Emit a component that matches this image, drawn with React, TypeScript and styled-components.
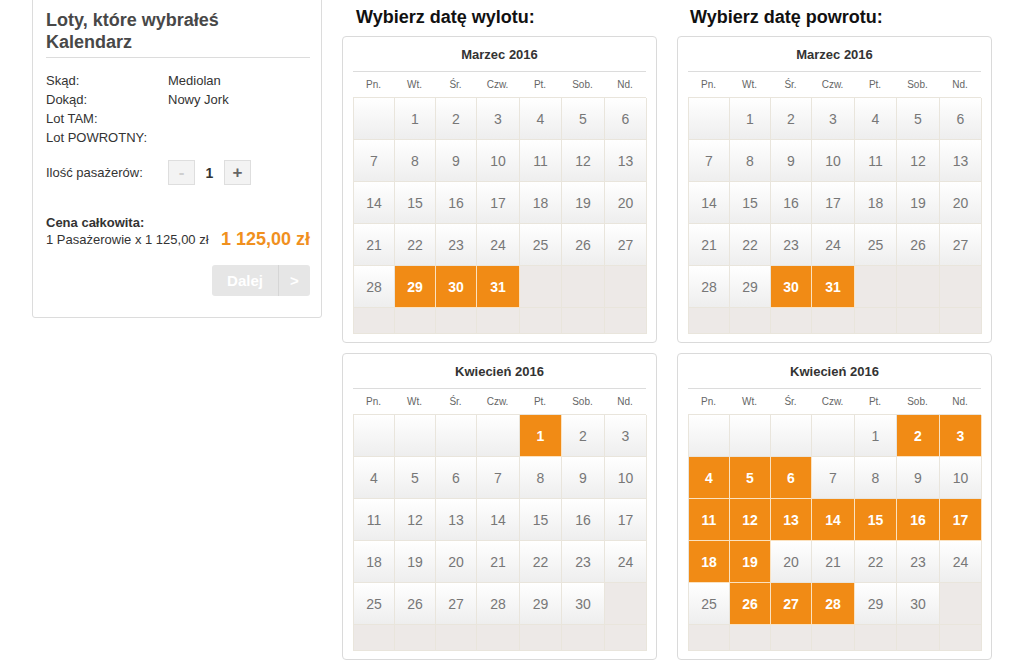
import React from "react";
import styled, { createGlobalStyle, css } from "styled-components";

const Global = createGlobalStyle`
  html, body { margin: 0; padding: 0; background: #fff; }
  body { font-family: "Liberation Sans", Arial, Helvetica, sans-serif; color: #333; overflow: hidden; }
  * { box-sizing: border-box; }
`;

const Page = styled.div`
  display: flex;
  align-items: flex-start;
  gap: 20px;
  padding-left: 32px;
  width: 1022px;
  height: 669px;
  overflow: hidden;
`;

const Panel = styled.div`
  width: 290px;
  margin-top: -3px;
  border: 1px solid #dcdcdc;
  border-radius: 3px;
  padding: 11px 11px 21px 13px;
`;

const PanelTitle = styled.h2`
  margin: 0;
  font-size: 18px;
  line-height: 22px;
  font-weight: bold;
  color: #484848;
  padding-bottom: 4px;
  border-bottom: 1px solid #dcdcdc;
`;

const InfoList = styled.div`
  margin-top: 13px;
  display: grid;
  grid-template-columns: 122px 1fr;
  font-size: 13px;
  line-height: 19px;
  color: #333;
`;

const CountRow = styled.div`
  margin-top: 13px;
  display: flex;
  align-items: center;
  font-size: 13px;
  color: #333;
`;

const CountLabel = styled.span`
  width: 122px;
`;

const StepBtn = styled.div<{ $disabled?: boolean }>`
  width: 27px;
  height: 25px;
  border: 1px solid #dedede;
  background: #f3f3f3;
  display: flex;
  align-items: center;
  justify-content: center;
  font-weight: bold;
  font-size: 17px;
  color: ${(p) => (p.$disabled ? "#cfcfcf" : "#666")};
`;

const CountValue = styled.span`
  width: 29px;
  text-align: center;
  font-weight: bold;
  font-size: 14px;
  color: #333;
`;

const TotalBlock = styled.div`
  margin-top: 29px;
  font-size: 13px;
  line-height: 17px;
`;

const TotalLabel = styled.div`
  font-weight: bold;
  color: #333;
`;

const TotalRow = styled.div`
  display: flex;
  justify-content: space-between;
  align-items: center;
`;

const Price = styled.span`
  font-size: 18px;
  font-weight: bold;
  color: #f0901e;
`;

const Actions = styled.div`
  display: flex;
  justify-content: flex-end;
  margin-top: 17px;
`;

const NextBtn = styled.div`
  display: flex;
  height: 31px;
  width: 98px;
  background: #e6e6e6;
  border-radius: 3px;
  color: #fff;
  font-weight: bold;
  font-size: 15px;
`;

const NextPart = styled.span<{ $w: number; $divider?: boolean }>`
  width: ${(p) => p.$w}px;
  display: flex;
  align-items: center;
  justify-content: center;
  ${(p) => p.$divider && css`border-left: 1px solid #d6d6d6;`}
`;

const Column = styled.div`
  width: 315px;
  display: flex;
  flex-direction: column;
  gap: 10px;
`;

const ColumnHeading = styled.h1<{ $indent: number }>`
  margin: 0 0 -8px;
  padding-left: ${(p) => p.$indent}px;
  font-size: 18px;
  line-height: 34px;
  font-weight: bold;
  color: #111;
`;

const Card = styled.div`
  border: 1px solid #dadada;
  border-radius: 4px;
  padding: 0 10px 8px;
`;

const MonthTitle = styled.div`
  height: 35px;
  display: flex;
  align-items: center;
  justify-content: center;
  font-size: 13px;
  font-weight: bold;
  color: #333;
  border-bottom: 1px solid #dcdcdc;
`;

const COLS = "41px 41px 41px 43px 42px 43px 42px";

const WeekRow = styled.div`
  display: grid;
  grid-template-columns: ${COLS};
  height: 25px;
  align-items: center;
  font-size: 10px;
  color: #666;
  text-align: center;
`;

const Grid = styled.div`
  display: grid;
  grid-template-columns: ${COLS};
  border-top: 1px solid #e9e5dc;
  border-left: 1px solid #e9e5dc;
`;

type Kind = "day" | "blank" | "pad" | "sel";

const Cell = styled.div<{ $kind: Kind; $short?: boolean }>`
  height: ${(p) => (p.$short ? 26 : 42)}px;
  border-right: 1px solid #e9e5dc;
  border-bottom: 1px solid #e9e5dc;
  display: flex;
  align-items: center;
  justify-content: center;
  font-size: 14px;
  color: #777;
  ${(p) =>
    (p.$kind === "day" || p.$kind === "blank") &&
    css`background: linear-gradient(#ffffff, #eeeeee);`}
  ${(p) => p.$kind === "pad" && css`background: #ede9e7;`}
  ${(p) =>
    p.$kind === "sel" &&
    css`
      background: #f18b15;
      color: #fff;
      font-weight: bold;
      border-color: #fbe2c0;
    `}
`;

type Month = { name: string; offset: number; days: number; selected: number[] };

function Calendar({ m }: { m: Month }) {
  const cells: { kind: Kind; label?: number; short?: boolean }[] = [];
  for (let i = 0; i < m.offset; i++) cells.push({ kind: "blank" });
  for (let d = 1; d <= m.days; d++)
    cells.push({ kind: m.selected.includes(d) ? "sel" : "day", label: d });
  while (cells.length % 7) cells.push({ kind: "pad" });
  for (let i = 0; i < 7; i++) cells.push({ kind: "pad", short: true });
  return (
    <Card>
      <MonthTitle>{m.name}</MonthTitle>
      <WeekRow>
        {["Pn.", "Wt.", "Śr.", "Czw.", "Pt.", "Sob.", "Nd."].map((w) => (
          <span key={w}>{w}</span>
        ))}
      </WeekRow>
      <Grid>
        {cells.map((c, i) => (
          <Cell key={i} $kind={c.kind} $short={c.short}>
            {c.label}
          </Cell>
        ))}
      </Grid>
    </Card>
  );
}

const range = (a: number, b: number) => Array.from({ length: b - a + 1 }, (_, i) => a + i);

export default function App() {
  return (
    <>
      <Global />
      <Page>
        <Panel>
          <PanelTitle>
            Loty, które wybrałeś
            <br />
            Kalendarz
          </PanelTitle>
          <InfoList>
            <span>Skąd:</span>
            <span>Mediolan</span>
            <span>Dokąd:</span>
            <span>Nowy Jork</span>
            <span>Lot TAM:</span>
            <span></span>
            <span>Lot POWROTNY:</span>
            <span></span>
          </InfoList>
          <CountRow>
            <CountLabel>Ilość pasażerów:</CountLabel>
            <StepBtn $disabled>-</StepBtn>
            <CountValue>1</CountValue>
            <StepBtn>+</StepBtn>
          </CountRow>
          <TotalBlock>
            <TotalLabel>Cena całkowita:</TotalLabel>
            <TotalRow>
              <span>1 Pasażerowie x 1 125,00 zł</span>
              <Price>1 125,00 zł</Price>
            </TotalRow>
          </TotalBlock>
          <Actions>
            <NextBtn>
              <NextPart $w={66}>Dalej</NextPart>
              <NextPart $w={32} $divider>
                &gt;
              </NextPart>
            </NextBtn>
          </Actions>
        </Panel>
        <Column>
          <ColumnHeading $indent={14}>Wybierz datę wylotu:</ColumnHeading>
          <Calendar m={{ name: "Marzec 2016", offset: 1, days: 31, selected: [29, 30, 31] }} />
          <Calendar m={{ name: "Kwiecień 2016", offset: 4, days: 30, selected: [1] }} />
        </Column>
        <Column>
          <ColumnHeading $indent={13}>Wybierz datę powrotu:</ColumnHeading>
          <Calendar m={{ name: "Marzec 2016", offset: 1, days: 31, selected: [30, 31] }} />
          <Calendar
            m={{
              name: "Kwiecień 2016",
              offset: 4,
              days: 30,
              selected: [2, 3, 4, 5, 6, ...range(11, 19), 26, 27, 28],
            }}
          />
        </Column>
      </Page>
    </>
  );
}
